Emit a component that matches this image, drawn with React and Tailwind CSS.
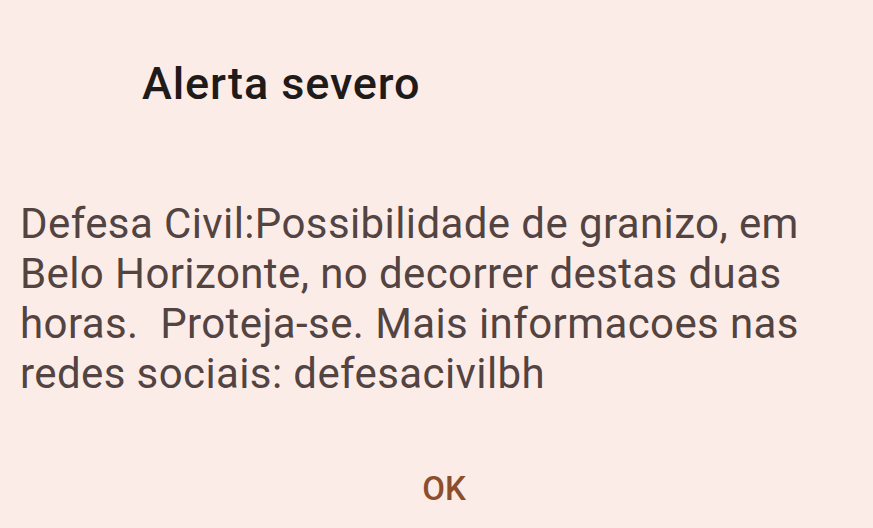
import React from 'react';

export default function App() {
  return (
    <div className="w-[873px] h-[528px] bg-[#fcece8] overflow-hidden" style={{ fontFamily: 'Roboto, "Noto Sans", sans-serif' }}>
      <div className="pl-[142px] pt-[58px]">
        <h2 className="text-[45px] leading-[52px] font-medium tracking-[0.9px] text-[#201a19]">Alerta severo</h2>
      </div>
      <p className="mt-[89px] pl-[20px] pr-[30px] text-[42px] leading-[50px] tracking-[0.4px] text-[#534341]">
        Defesa Civil:Possibilidade de granizo, em Belo Horizonte, no decorrer destas duas horas.&nbsp; Proteja-se. Mais informacoes nas redes sociais: defesacivilbh
      </p>
      <div className="flex justify-center pl-[15px] mt-[70px]">
        <button className="text-[33px] leading-[40px] font-medium text-[#8b4f2e]">OK</button>
      </div>
    </div>
  );
}
